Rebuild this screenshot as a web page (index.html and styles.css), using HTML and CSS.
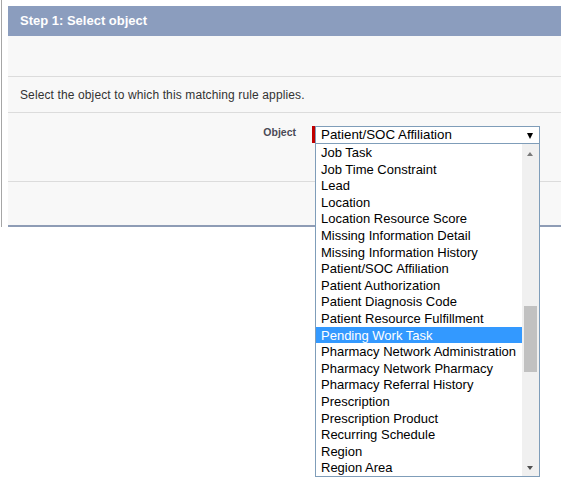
FILE: index.html
```html
<!DOCTYPE html>
<html>
<head>
<meta charset="utf-8">
<link rel="stylesheet" href="styles.css">
</head>
<body>
<div class="page">
<div class="frame">
  <div class="panel">
    <div class="panel-header">Step 1: Select object</div>
    <div class="section blank"></div>
    <div class="section desc">Select the object to which this matching rule applies.</div>
    <div class="section field">
      <div class="field-row">
        <label class="field-label">Object</label>
        <div class="required"></div>
        <div class="select">
          <div class="select-box"><span class="select-value">Patient/SOC Affiliation</span><span class="arrow"></span></div>
          <div class="dropdown">
            <ul class="options">
              <li>Job Task</li>
              <li>Job Time Constraint</li>
              <li>Lead</li>
              <li>Location</li>
              <li>Location Resource Score</li>
              <li>Missing Information Detail</li>
              <li>Missing Information History</li>
              <li>Patient/SOC Affiliation</li>
              <li>Patient Authorization</li>
              <li>Patient Diagnosis Code</li>
              <li>Patient Resource Fulfillment</li>
              <li class="active">Pending Work Task</li>
              <li>Pharmacy Network Administration</li>
              <li>Pharmacy Network Pharmacy</li>
              <li>Pharmacy Referral History</li>
              <li>Prescription</li>
              <li>Prescription Product</li>
              <li>Recurring Schedule</li>
              <li>Region</li>
              <li>Region Area</li>
            </ul>
            <div class="scrollbar">
              <span class="sb-up"></span>
              <div class="sb-thumb"></div>
              <span class="sb-down"></span>
            </div>
          </div>
        </div>
      </div>
    </div>
    <div class="section footer"></div>
  </div>
</div>
</div>
</body>
</html>
```

FILE: styles.css
```css
html, body {
  margin: 0;
  padding: 0;
  background: #ffffff;
  font-family: "Liberation Sans", Arial, sans-serif;
}

.page {
  min-height: 491px;
}

.frame {
  margin-left: 1px;
  border-left: 1px solid #a6a6a6;
  padding: 6px 0 0 6px;
}

.panel {
  background: #f8f8f8;
  border-bottom: 2px solid #8e9cb5;
}

.panel-header {
  height: 30px;
  line-height: 30px;
  padding-left: 12px;
  background: #8b9dbe;
  color: #ffffff;
  font-weight: bold;
  font-size: 13px;
}

.section {
  border-bottom: 1px solid #dcdcdc;
}

.blank {
  height: 40px;
}

.desc {
  height: 35px;
  line-height: 36px;
  padding-left: 12px;
  font-size: 12px;
  letter-spacing: 0.12px;
  color: #333333;
}

.field {
  height: 68px;
}

.field-row {
  display: flex;
  align-items: flex-start;
  padding-top: 13px;
}

.field-label {
  width: 288px;
  text-align: right;
  font-size: 10.5px;
  line-height: 12px;
  font-weight: bold;
  color: #4a4a56;
}

.required {
  width: 3px;
  height: 17px;
  margin-left: 16px;
  background: #c00000;
}

.select {
  position: relative;
  z-index: 2;
}

.select-box {
  box-sizing: border-box;
  width: 225px;
  height: 18px;
  border: 1px solid #7f9db9;
  background: #ffffff;
  display: flex;
  align-items: center;
  justify-content: space-between;
  padding: 0 6px 0 5px;
}

.select-value {
  font-size: 13.33px;
  line-height: 16px;
  color: #000000;
}

.arrow {
  width: 0;
  height: 0;
  border-left: 3px solid transparent;
  border-right: 3px solid transparent;
  border-top: 6px solid #000000;
  margin-top: 1px;
}

.dropdown {
  position: absolute;
  top: 17px;
  left: 0;
  box-sizing: border-box;
  width: 225px;
  height: 334px;
  border: 1px solid #7f9db9;
  background: #ffffff;
  display: flex;
}

.options {
  list-style: none;
  margin: 0;
  padding: 0;
  width: 206px;
  flex: none;
}

.options li {
  height: 16.6px;
  line-height: 17.6px;
  padding-left: 5px;
  font-size: 13px;
  color: #000000;
  white-space: nowrap;
}

.options li.active {
  background: #3399ff;
  color: #ffffff;
}

.scrollbar {
  position: relative;
  width: 17px;
  flex: none;
  background: #f0f0f0;
}

.sb-thumb {
  position: absolute;
  left: 2px;
  top: 162px;
  width: 13px;
  height: 66px;
  background: #c1c1c1;
}

.sb-up {
  position: absolute;
  top: 8px;
  left: 5px;
  width: 0;
  height: 0;
  border-left: 3.5px solid transparent;
  border-right: 3.5px solid transparent;
  border-bottom: 4px solid #7a7a7a;
}

.sb-down {
  position: absolute;
  top: 322px;
  left: 5px;
  width: 0;
  height: 0;
  border-left: 3.5px solid transparent;
  border-right: 3.5px solid transparent;
  border-top: 4px solid #505050;
}

.footer {
  height: 43px;
  border-bottom: none;
}
```
